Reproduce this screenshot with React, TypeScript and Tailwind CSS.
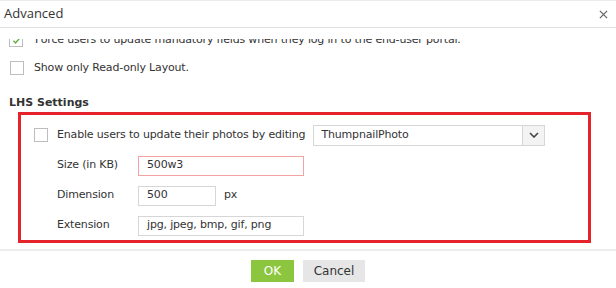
import React from "react";

function Check({ checked }: { checked?: boolean }) {
  return (
    <span className="flex h-[14px] w-[14px] shrink-0 items-center justify-center border border-[#bdbdbd] bg-white">
      {checked && (
        <svg viewBox="0 0 10 10" className="h-[9px] w-[9px]">
          <path d="M1.5 5.2 4 7.6 8.6 2.4" fill="none" stroke="#6ab04c" strokeWidth="1.6" />
        </svg>
      )}
    </span>
  );
}

function Field({ label, value, wide, error, suffix }: { label: string; value: string; wide?: boolean; error?: boolean; suffix?: string }) {
  return (
    <div className="flex h-[20px] items-center">
      <span className="w-[81px] shrink-0">{label}</span>
      <div
        className={`flex h-[20px] items-center border px-[8px] ${wide ? "w-[166px]" : "w-[78px]"} ${
          error ? "border-[#f2a3a3]" : "border-[#d6d6d6]"
        }`}
      >
        {value}
      </div>
      {suffix && <span className="ml-[8px]">{suffix}</span>}
    </div>
  );
}

export default function App() {
  return (
    <div className="flex h-[288px] w-[616px] flex-col overflow-hidden bg-white font-['DejaVu_Sans',sans-serif] text-[11px] tracking-[-0.17px] text-[#333]">
      {/* Header */}
      <div className="flex h-[28px] shrink-0 items-center justify-between border-t border-b border-t-[#ececec] border-b-[#e2e2e2] pl-[4px] pr-[8px]">
        <span className="font-['Open_Sans',sans-serif] text-[13px] tracking-normal text-[#333]">Advanced</span>
        <svg viewBox="0 0 10 10" className="h-[9px] w-[9px]">
          <path d="M1 1 9 9M9 1 1 9" stroke="#666" strokeWidth="1.4" />
        </svg>
      </div>

      {/* Body */}
      <div className="flex h-[221px] shrink-0 flex-col pt-[11px]">
        <div className="flex flex-1 flex-col overflow-hidden">
          <div className="-mt-[7px] flex h-[16px] items-center gap-[12px] pl-[9px]">
            <Check checked />
            <span>Force users to update mandatory fields when they log in to the end-user portal.</span>
          </div>
          <div className="mt-[12px] flex h-[16px] items-center gap-[10px] pl-[10px]">
            <Check />
            <span>Show only Read-only Layout.</span>
          </div>
          <div className="mt-[19px] pl-[9px] font-bold tracking-normal">LHS Settings</div>
          <div className="mx-[18px] mt-0 flex w-[573px] flex-col gap-[10px] border-[3px] border-[#e4232b] pt-[10px] pb-[4px] pl-[13px]">
            <div className="flex h-[21px] items-center">
              <Check />
              <span className="ml-[9px] mr-[8px]">Enable users to update their photos by editing</span>
              <div className="flex h-[21px] w-[232px] items-stretch border border-[#d6d6d6]">
                <span className="flex flex-1 items-center pl-[7px]">ThumpnailPhoto</span>
                <span className="flex w-[22px] items-center justify-center border-l border-[#d6d6d6] bg-[#f3f3f3]">
                  <svg viewBox="0 0 10 6" className="h-[6px] w-[10px]">
                    <path d="M1 1 5 5 9 1" fill="none" stroke="#444" strokeWidth="1.6" />
                  </svg>
                </span>
              </div>
            </div>
            <div className="flex flex-col gap-[10px] pl-[23px]">
              <Field label="Size (in KB)" value="500w3" wide error />
              <Field label="Dimension" value="500" suffix="px" />
              <Field label="Extension" value="jpg, jpeg, bmp, gif, png" wide />
            </div>
          </div>
        </div>
      </div>

      {/* Footer */}
      <div className="flex flex-1 justify-center gap-[9px] border-t-2 border-[#ececec] pt-[9px]">
        <button className="h-[22px] w-[43px] bg-[#8cc63f] text-[12px] tracking-normal text-white">OK</button>
        <button className="h-[22px] w-[62px] bg-[#e6e6e6] text-[12px] tracking-normal text-[#333]">Cancel</button>
      </div>
    </div>
  );
}
